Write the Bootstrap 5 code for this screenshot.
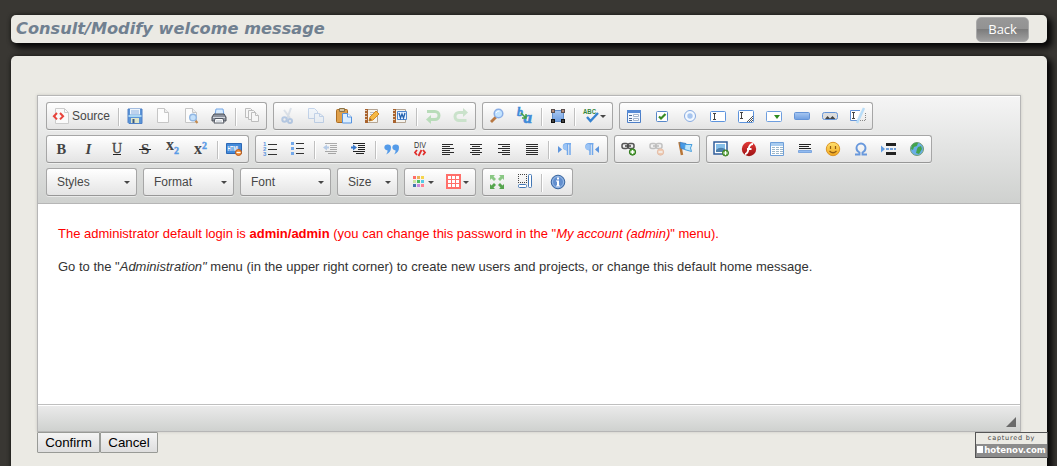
<!DOCTYPE html>
<html lang="en">
<head>
<meta charset="utf-8">
<title>Consult/Modify welcome message</title>
<link href="https://cdn.jsdelivr.net/npm/bootstrap@5.3.0/dist/css/bootstrap.min.css" rel="stylesheet">
<style>
body{background:#393733;font-family:"Liberation Sans",Arial,sans-serif;height:466px;overflow:hidden;color:#333}
.panel{background:#ebeae4;margin-left:11px;width:1036px;border-radius:5px;box-shadow:4px 4px 6px 1px #080808,0 0 4px rgba(0,0,0,.5)}
.titlebar{height:28px;margin-top:15px}
.titlebar h1{font:italic bold 16.2px/28px "DejaVu Sans",Verdana,sans-serif;color:#708090;margin:0 0 0 5px;white-space:nowrap}
.back{width:53px;height:25px;margin-right:18px;padding:0;border:1px solid #aaa;border-radius:5px;background:linear-gradient(#989898 0,#929292 48%,#7c7c7c 50%,#a0a0a0 100%);color:#fff;font:13px/22px "Open Sans",sans-serif;letter-spacing:-.1px}
.mainpane{height:430px;margin-top:13px;padding:39px 26px 0;border-radius:5px 5px 0 0}
.editor{border:1px solid #b6b6b6;width:984px;height:337px;box-shadow:0 0 3px rgba(0,0,0,.15)}
.tools{height:108px;border-bottom:1px solid #b6b6b6;background:linear-gradient(#f5f5f5,#cfd1cf);padding:6px 8px 0;box-shadow:inset 0 1px #fff}
.tools .line{height:28px;margin-bottom:5px;gap:6px}
.grp{height:28px;border:1px solid #a6a6a6;border-bottom-color:#979797;border-radius:3px;background:linear-gradient(#fff,#e4e4e4);box-shadow:0 1px 0 rgba(255,255,255,.5)}
.tb{width:28px;height:26px;padding:5px 6px;border:0;background:none;display:flex;align-items:center;color:#474747;font-size:12px;line-height:16px}
.tb svg{width:16px;height:16px;flex:none;display:block;overflow:visible}
.tb.src{width:69px}.tb.src span{margin-left:3px}
.tb.wide{width:35px}
.wide::after,.combo::after{content:"";border:3px solid transparent;border-top-color:#474747;border-bottom:0;margin-left:1px}
.wide::after{flex:none;margin-left:1px}
.off svg{opacity:.32}
.div-v{width:1px;height:18px;margin:5px 2px 0;background:#c0c0c0;box-shadow:1px 0 #fff}
.combo{width:91px;padding:0 6px 0 10px;font-size:12px;color:#474747}
.combo.short{width:61px}
.doc{height:200px;background:#fff;padding:20px 20px;font-size:13px;line-height:20.8px;white-space:nowrap}
.doc p{margin:0 0 12px}.doc .note{color:red}
.status{height:27px;border-top:1px solid #bfbfbf;background:linear-gradient(#ebebeb,#cfd1cf);box-shadow:inset 0 1px #fff;padding:0 4px 4px}
.grip{border:5px solid #6a6a6a;border-top-color:transparent;border-left-color:transparent;width:0;height:0}
.act{height:21px;border:1px solid #989a96;padding:0;border-radius:1px;background:linear-gradient(#f4f4f4,#dedede);color:#000;font-size:13.33px;line-height:19px}
.stamp{right:9px;top:432px;width:73px;height:26px;border:1px solid #555;background:#ebeae4;color:#444;text-align:center;font:6.500px/11px "DejaVu Sans",sans-serif;letter-spacing:.75px}
.stamp b{display:block;height:13px;background:#8c8c8c;color:#fff;font:bold 8.600px/12px "DejaVu Sans",sans-serif;letter-spacing:-.05px;white-space:nowrap}
.stamp i{display:inline-block;width:6px;height:7px;background:#fff;margin-right:1px}
</style>
</head>
<body>
<svg width="0" height="0" class="position-absolute" aria-hidden="true"><defs>
<linearGradient id="bl" x2="0" y2="1"><stop stop-color="#a9c8f2"/><stop offset="1" stop-color="#6f9ee0"/></linearGradient>
<linearGradient id="gd" x2="0" y2="1"><stop stop-color="#ffe270"/><stop offset="1" stop-color="#f2a61c"/></linearGradient>
<linearGradient id="rd" x2="0" y2="1"><stop stop-color="#e33a37"/><stop offset="1" stop-color="#9c1113"/></linearGradient>
</defs></svg>

<header class="panel titlebar d-flex align-items-center justify-content-between">
<h1>Consult/Modify welcome message</h1><button class="back">Back</button>
</header>
<main class="panel mainpane">
<section class="editor">
<div class="tools">
<div class="line d-flex">
 <div class="grp d-flex">
  <button class="tb src"><svg viewBox="0 0 16 16"><path d="M2.5.5h9l4 4v11h-13z" fill="#fafafa" stroke="#ccc"/><path d="M11.500.5v4h4" fill="none" stroke="#ccc"/><path d="M4 5 .9 8.200 4 11.400M7 5l3.100 3.200L7 11.400" fill="none" stroke="#e8433b" stroke-width="2"/></svg><span>Source</span></button>
  <i class="div-v"></i>
  <button class="tb"><svg viewBox="0 0 16 16"><path d="M1 1h14v14.500H2l-1-1z" fill="#5b94d8" stroke="#4e80c6"/><path d="M3 1h10v5.500H3z" fill="#eef5fc"/><path d="M4 3h8M4 5h8" stroke="#8bb0de"/><path d="M1.500 8h13" stroke="#a9d6f2" stroke-width="2"/><path d="M4 10h8v5H4z" fill="#dfe5c8"/><path d="M5.500 11h2v4h-2z" fill="#3d5c85"/></svg></button>
  <button class="tb"><svg viewBox="0 0 16 16"><path d="M2.500.5h7l4 4v10h-11z" fill="#fcfcfc" stroke="#c6c6c6"/><path d="M9.500.5v4h4" fill="#eee" stroke="#c6c6c6"/></svg></button>
  <button class="tb"><svg viewBox="0 0 16 16"><path d="M2.500.5h7l4 4v10h-11z" fill="#fcfcfc" stroke="#c6c6c6"/><path d="M9.500.5v4h4" fill="#eee" stroke="#c6c6c6"/><path d="m12 12 2.500 3" stroke="#c48a4e" stroke-width="2"/><circle cx="10" cy="9.500" r="3.300" fill="#c4e0fa" stroke="#91b7e3" stroke-width="1.400"/></svg></button>
  <button class="tb"><svg viewBox="0 0 16 16"><path d="m4 7 1-6h7l1 6z" fill="#d7ebff" stroke="#75a7e6"/><path d="m1 9 2-3h10l2 3v4H1z" fill="#8d939e" stroke="#4c5058"/><path d="M2 9.500h12" stroke="#d3d7de"/><path d="M4 10.500h8l1 4.500H3z" fill="#fff" stroke="#505661"/><path d="M5 13h6" stroke="#b5c0cc"/></svg></button>
  <i class="div-v"></i>
  <button class="tb"><svg viewBox="0 0 16 16" fill="#f6f6f6" stroke="#bdbdbd"><path d="M1.500.5h5l2 2v7h-7z"/><path d="M4.500 2.500h5l2 2v7h-7z"/><path d="M7.500 4.500h4l3 3v6h-7z"/><path d="M11.500 4.500v3h3"/></svg></button>
 </div>
 <div class="grp d-flex">
  <button class="tb off"><svg viewBox="0 0 16 16" fill="none"><path d="m11 0-4 11M4 2l6 8" stroke="#a0b4cc" stroke-width="2"/><circle cx="4.500" cy="11.500" r="2.200" stroke="#3d78c8" stroke-width="2"/><circle cx="10" cy="13" r="2" stroke="#3d78c8" stroke-width="2"/></svg></button>
  <button class="tb off"><svg viewBox="0 0 16 16" fill="#e0efff" stroke="#5a8cd0"><path d="M.5.5h6l3 3v7h-9z"/><path d="M6.500 5.500h5l4 3v6h-9z"/><path d="M11.500 5.500v3h4" fill="none"/></svg></button>
  <button class="tb"><svg viewBox="0 0 16 16"><rect x=".5" y="1.500" width="11" height="13" rx="1" fill="#dfa04b" stroke="#ac6c22"/><path d="M3.500.5h5v3h-5z" fill="#d6c6a8" stroke="#8d7446"/><path d="M6.500 5.500h5l4 3.500v6h-9z" fill="#dceeff" stroke="#5693df"/><path d="M11.500 5.500V9h4" fill="#fff" stroke="#5693df"/></svg></button>
  <button class="tb"><svg viewBox="0 0 16 16"><path d="M3.500 1.500h10v13h-10z" fill="#f6f3ed" stroke="#b4a594"/><path d="M1 1h3v14H1z" fill="#a9632e"/><path d="M1 2.500h2M1 5.500h2M1 8.500h2M1 11.500h2" stroke="#e1cdb8"/><path d="M6 4.500h6M6 6.500h4" stroke="#b8bcc3"/><path d="m5 13 1-4 6-6 3 3-6 6z" fill="#f5b844" stroke="#d68a24"/><path d="m5 13 1-3 2 2z" fill="#986332"/></svg></button>
  <button class="tb"><svg viewBox="0 0 16 16"><path d="M3.500 1.500h10v13h-10z" fill="#f6f3ed" stroke="#b4a594"/><path d="M1 1h3v14H1z" fill="#a9632e"/><path d="M1 2.500h2M1 5.500h2M1 8.500h2M1 11.500h2" stroke="#e1cdb8"/><path d="M5.500 3.500h9v8h-9z" fill="#e7f1ff" stroke="#4e86ce"/><path d="m7 5 1.500 5L10 6l1.500 4L13 5" fill="none" stroke="#2361ae" stroke-width="1.300"/></svg></button>
  <i class="div-v"></i>
  <button class="tb"><svg viewBox="0 0 16 16"><path d="M2 3.500h8a4 4 0 0 1 0 8H5" fill="none" stroke="#b9dcba" stroke-width="3"/><path d="M6 7v9l-5-4.500z" fill="#b9dcba"/></svg></button>
  <button class="tb"><svg viewBox="0 0 16 16"><path d="M13.500 12.500H6a4 4 0 0 1 0-8h5" fill="none" stroke="#cae2cb" stroke-width="3"/><path d="M10 0v9l5-4.500z" fill="#cae2cb"/></svg></button>
 </div>
 <div class="grp d-flex">
  <button class="tb"><svg viewBox="0 0 16 16"><path d="m2 14 5-5" stroke="#b87842" stroke-width="2.800"/><circle cx="9.500" cy="5.500" r="4.300" fill="#c2e3ff" stroke="#8aaee6" stroke-width="1.500"/><path d="M7 5q1-2.500 3.500-2" fill="none" stroke="#fff"/></svg></button>
  <button class="tb"><svg viewBox="0 0 16 16"><text x="0" y="8" font-family="Liberation Serif" font-size="12" font-weight="bold" font-style="italic" fill="#3f8bd8" stroke="#3f8bd8" stroke-width=".5">b</text><text x="6.500" y="15" font-family="Liberation Serif" font-size="17" font-weight="bold" font-style="italic" fill="#3f8bd8" stroke="#3f8bd8" stroke-width=".6">a</text><path d="m4 5 4.500 4.500M9 6v4H5" fill="none" stroke="#42a148" stroke-width="1.500"/></svg></button>
  <i class="div-v"></i>
  <button class="tb"><svg viewBox="0 0 16 16"><path d="M2.500 2.500h11v11h-11z" fill="url(#bl)" stroke="#638fca"/><path d="M1 1h4v4H1zM11 1h4v4h-4z" fill="#5d5150"/><path d="M2 2h2v2H2zM12 2h2v2h-2z" fill="#b98f7c"/><path d="M1 11h4v4H1zM11 11h4v4h-4z" fill="#111"/><path d="M2 12h2v2H2zM12 12h2v2h-2z" fill="#444"/></svg></button>
  <i class="div-v"></i>
  <button class="tb wide"><svg viewBox="0 0 16 16"><text x="0" y="6" textLength="13" lengthAdjust="spacingAndGlyphs" font-family="Liberation Sans" font-size="7" font-weight="bold" fill="#35863a">ABC</text><path d="m4 9 3.500 4L15 5" fill="none" stroke="#3682d1" stroke-width="2.400"/></svg></button>
 </div>
 <div class="grp d-flex">
  <button class="tb"><svg viewBox="0 0 16 16"><path d="M1.500 2.500h13v12h-13z" fill="#f1f7ff" stroke="#4c7ec7"/><path d="M1 2h14v3H1z" fill="#568bd6"/><path d="M3 7.500h3M3 10.500h3M3 12.500h3" stroke="#4f6b91"/><path d="M7.500 6.500h5v2h-5zM7.500 10.500h5v2h-5z" fill="#fff" stroke="#a3b6ce"/></svg></button>
  <button class="tb"><svg viewBox="0 0 16 16"><rect x="2.500" y="3.500" width="11" height="10" rx="1" fill="#fff" stroke="#5787c9"/><path d="m5 8.500 2 2L11.500 6" fill="none" stroke="#3a8c24" stroke-width="2.200"/></svg></button>
  <button class="tb"><svg viewBox="0 0 16 16"><circle cx="8" cy="8" r="5.500" fill="#f2f8ff" stroke="#87aae0"/><circle cx="8" cy="8" r="2.700" fill="#a7c5ef"/></svg></button>
  <button class="tb"><svg viewBox="0 0 16 16"><rect x=".5" y="3.500" width="15" height="10" rx="1" fill="#fff" stroke="#5c93dd"/><path d="M3 5.500h3M3 11.500h3M4.500 5.500v6" stroke="#444"/></svg></button>
  <button class="tb"><svg viewBox="0 0 16 16"><rect x=".5" y="2.500" width="15" height="12" rx="1" fill="#fff" stroke="#5c93dd"/><path d="M2 4.500h3M2 10.500h3M3.500 4.500v6" stroke="#444"/><path d="m9 14 6-6M11 14l4-4M13 14l2-2" stroke="#555"/></svg></button>
  <button class="tb"><svg viewBox="0 0 16 16"><rect x=".5" y="3.500" width="15" height="10" rx="1" fill="#fff" stroke="#6e9edf"/><path d="M8 7h6l-3 4z" fill="#2f8b20"/></svg></button>
  <button class="tb"><svg viewBox="0 0 16 16"><rect x=".5" y="4.500" width="15" height="7" rx="1" fill="url(#bl)" stroke="#6594d7"/></svg></button>
  <button class="tb"><svg viewBox="0 0 16 16"><rect x=".5" y="4.500" width="15" height="7" rx="2" fill="#ddd" stroke="#6594d7"/><path d="m3 11 2.500-3L8 10.500 10.500 8l3 3z" fill="#464646"/></svg></button>
  <button class="tb"><svg viewBox="0 0 16 16"><path d="M10 2.500H.5v10H7" fill="#fff" stroke="#6594d7"/><path d="M2 4.500h3M2 10.500h3M3.500 4.500v6" stroke="#444"/><path d="m14 0-7 15" stroke="#b9ddf8" stroke-width="2.500"/><path d="M15.500 5v7.500H9" fill="none" stroke="#888" stroke-dasharray="1"/></svg></button>
 </div>
</div>
<div class="line d-flex">
 <div class="grp d-flex">
  <button class="tb"><svg viewBox="0 0 16 16" font-family="Liberation Serif"><text x="3.500" y="13" font-size="14.500" font-weight="bold" fill="#444">B</text></svg></button>
  <button class="tb"><svg viewBox="0 0 16 16" font-family="Liberation Serif"><text x="4.500" y="13" font-size="15" font-weight="bold" font-style="italic" fill="#444">I</text></svg></button>
  <button class="tb"><svg viewBox="0 0 16 16" font-family="Liberation Serif"><text x="3" y="12" font-size="14" fill="#444" stroke="#444" stroke-width=".3">U</text><path d="M4 13.500h8" stroke="#222"/></svg></button>
  <button class="tb"><svg viewBox="0 0 16 16" font-family="Liberation Serif"><text x="4" y="13" font-size="15" font-weight="bold" fill="#444">S</text><path d="M2 8.500h12" stroke="#222"/></svg></button>
  <button class="tb"><svg viewBox="0 0 16 16" font-family="Liberation Serif" font-weight="bold"><text x="1" y="9" font-size="16" fill="#444">x</text><text x="9" y="13" font-size="10" fill="#5a9be6" stroke="#5a9be6" stroke-width=".4">2</text></svg></button>
  <button class="tb"><svg viewBox="0 0 16 16" font-family="Liberation Serif" font-weight="bold"><text x="1" y="13" font-size="16" fill="#444">x</text><text x="9" y="7.500" font-size="10" fill="#5a9be6" stroke="#5a9be6" stroke-width=".4">2</text></svg></button>
  <i class="div-v"></i>
  <button class="tb"><svg viewBox="0 0 16 16"><path d="M.5 2.500h15v10H.5z" fill="#438ada" stroke="#2d68b5"/><text x="1.500" y="10" textLength="12" lengthAdjust="spacingAndGlyphs" font-family="Liberation Sans" font-size="7" font-weight="bold" fill="#fff">HTML</text><circle cx="12.500" cy="11.500" r="3" fill="#f08e36" stroke="#bc5a17"/><path d="M10.500 11.500h4" stroke="#fff" stroke-width="1.300"/></svg></button>
 </div>
 <div class="grp d-flex">
  <button class="tb"><svg viewBox="0 0 16 16"><path d="M6 3.500h9M6 8.500h9M6 13.500h9" stroke="#333"/><g font-family="Liberation Sans" font-size="6" font-weight="bold" fill="#5d96df"><text x="1" y="5">1</text><text x="1" y="10">2</text><text x="1" y="15">3</text></g></svg></button>
  <button class="tb"><svg viewBox="0 0 16 16"><path d="M6 2.500h8M6 7.500h8M6 12.500h8" stroke="#333"/><path d="M1 1h3v3H1zM1 6h3v3H1zM1 11h3v3H1z" fill="#74a9eb"/></svg></button>
  <i class="div-v"></i>
  <button class="tb off"><svg viewBox="0 0 16 16"><path d="M2 2.500h12M7 4.500h7M7 6.500h7M7 8.500h7M2 10.500h12M5 12.500h8" stroke="#111"/><path d="M4 3.500v6l-4-3z" fill="#3979cc"/><path d="M4 6.500h2" stroke="#3979cc" stroke-width="2"/></svg></button>
  <button class="tb"><svg viewBox="0 0 16 16"><path d="M2 2.500h12M7 4.500h7M7 6.500h7M7 8.500h7M2 10.500h12M5 12.500h8" stroke="#222"/><path d="M2 3.500v6l4-3z" fill="#3979cc"/><path d="M0 6.500h2" stroke="#3979cc" stroke-width="2"/></svg></button>
  <i class="div-v"></i>
  <button class="tb"><svg viewBox="0 0 16 16" fill="#549be9"><path d="M4 3.500a3 3 0 1 0-.3 5.900Q3.500 11.500 2 13.500q5-2 5-7A3 3 0 0 0 4 3.500zM12 3.500a3 3 0 1 0-.3 5.900Q11.500 11.500 10 13.500q5-2 5-7a3 3 0 0 0-3-3z"/></svg></button>
  <button class="tb"><svg viewBox="0 0 16 16" fill="none"><text x="2" y="7" font-family="Liberation Sans" font-size="9.500" textLength="12" lengthAdjust="spacingAndGlyphs" fill="#333">DIV</text><path d="M5 9 3 11.500 5 14M11 9l2 2.500-2 2.500M9.500 9l-3 6" stroke="#e02f2c" stroke-width="1.800"/></svg></button>
  <button class="tb"><svg viewBox="0 0 16 16" stroke="#2b2b2b"><path d="M2 3.500h11M2 5.500h8M2 7.500h12M2 9.500h8M2 11.500h12M2 13.500h8"/></svg></button>
  <button class="tb"><svg viewBox="0 0 16 16" stroke="#2b2b2b"><path d="M2 3.500h12M4 5.500h8M2 7.500h12M4 9.500h8M2 11.500h12M4 13.500h8"/></svg></button>
  <button class="tb"><svg viewBox="0 0 16 16" stroke="#2b2b2b"><path d="M2 3.500h12M6 5.500h8M2 7.500h12M6 9.500h8M2 11.500h12M6 13.500h8"/></svg></button>
  <button class="tb"><svg viewBox="0 0 16 16" stroke="#2b2b2b"><path d="M2 3.500h12M2 5.500h12M2 7.500h12M2 9.500h12M2 11.500h12M2 13.500h12"/></svg></button>
  <i class="div-v"></i>
  <button class="tb"><svg viewBox="0 0 16 16"><path d="M1 5v7l4-3.500z" fill="#5d95dd"/><path d="M14 2.700H9.500a3 3 0 0 0 0 6H10M10.500 3v11M13 3v11" fill="none" stroke="#72a8eb" stroke-width="1.500"/><path d="M10 3H9a3 3 0 0 0 0 6h1z" fill="#9bc4f5"/></svg></button>
  <button class="tb"><svg viewBox="0 0 16 16"><path d="M14 5v7l-4-3.500z" fill="#5d95dd"/><path d="M8.500 2.700H4a3 3 0 0 0 0 6h.5M5 3v11M7.500 3v11" fill="none" stroke="#72a8eb" stroke-width="1.500"/><path d="M4.500 3h-1a3 3 0 0 0 0 6h1z" fill="#9bc4f5"/></svg></button>
 </div>
 <div class="grp d-flex">
  <button class="tb"><svg viewBox="0 0 16 16"><g fill="#eee" stroke="#555" stroke-width="1.500"><rect x="1" y="2.500" width="6" height="5" rx="2"/><rect x="7" y="2.500" width="6" height="5" rx="2"/></g><path d="M4 5h6" stroke="#444" stroke-width="1.500"/><circle cx="11.500" cy="11" r="3.200" fill="#55a33a" stroke="#347b21"/><path d="M9.500 11h4M11.500 9v4" stroke="#fff" stroke-width="1.500"/></svg></button>
  <button class="tb off"><svg viewBox="0 0 16 16"><g fill="#eee" stroke="#555" stroke-width="1.500"><rect x="1" y="2.500" width="6" height="5" rx="2"/><rect x="7" y="2.500" width="6" height="5" rx="2"/></g><path d="M4 5h6" stroke="#444" stroke-width="1.500"/><circle cx="11.500" cy="11" r="3.200" fill="#f08336" stroke="#d45d1d"/><path d="M9.500 11h4" stroke="#fff" stroke-width="1.500"/></svg></button>
  <button class="tb"><svg viewBox="0 0 16 16"><path d="m2.500 1 2.500 13" stroke="#b97637" stroke-width="2.500"/><path d="m3 1.500 6 1v6l-5-1z" fill="#459ae8" stroke="#4584c2"/><path d="m8 3.500 7 0-1.500 3.500 1 3.500-7-2z" fill="#bde6fd" stroke="#4a9fdd"/></svg></button>
 </div>
 <div class="grp d-flex">
  <button class="tb"><svg viewBox="0 0 16 16"><path d="M1 1h13v12H1z" fill="#fff" stroke="#315d9b" stroke-width="1.500"/><path d="M3 3h9v8H3z" fill="#85bfe9"/><path d="M3 9q4-4 9-1v3H3z" fill="#4d7fac"/><circle cx="12.500" cy="12" r="3" fill="#67ae4a" stroke="#397d23"/><path d="M10.500 12h4M12.500 10v4" stroke="#fff"/></svg></button>
  <button class="tb"><svg viewBox="0 0 16 16"><circle cx="8" cy="8" r="7.200" fill="url(#rd)"/><path d="M12 3Q8.500 3 7.500 8T4 13M6 8h4.500" fill="none" stroke="#fff" stroke-width="1.800"/></svg></button>
  <button class="tb"><svg viewBox="0 0 16 16"><path d="M1.500 1.500h13v13h-13z" fill="#fff" stroke="#6e9fd9"/><path d="M2 2h12v3H2z" fill="#a8ccf0"/><path d="M3 6.500h3M7 6.500h3M11 6.500h3M3 8.500h3M7 8.500h3M11 8.500h3M3 10.500h3M7 10.500h3M11 10.500h3M3 12.500h3M7 12.500h3M11 12.500h3" stroke="#9db7c9"/></svg></button>
  <button class="tb"><svg viewBox="0 0 16 16"><path d="M2 3.500h12M2 5.500h10M2 7.500h12" stroke="#222"/><path d="M1.500 9.500h13v2h-13z" fill="#92bbf0" stroke="#7da7df"/></svg></button>
  <button class="tb"><svg viewBox="0 0 16 16"><circle cx="8" cy="8" r="6.700" fill="url(#gd)" stroke="#db9529"/><path d="M5.500 5v3M10.500 5v3M4.500 10q3.500 3.500 7 0" fill="none" stroke="#925e14" stroke-width="1.200"/></svg></button>
  <button class="tb"><svg viewBox="0 0 16 16"><path d="M2 13.500h4.500v-2Q3.500 10 3.500 7a4.500 4.500 0 0 1 9 0q0 3-3 4.500v2H14" fill="none" stroke="#6898dc" stroke-width="1.900"/></svg></button>
  <button class="tb"><svg viewBox="0 0 16 16"><path d="M5 3.500h10M5 12.500h10" stroke="#222" stroke-width="3"/><path d="M5 8h10" stroke="#4888d6" stroke-width="1.500" stroke-dasharray="3 1"/><path d="m0 4.500 4 3.500-4 3.500z" fill="#609be0"/></svg></button>
  <button class="tb"><svg viewBox="0 0 16 16"><circle cx="8" cy="8" r="6.500" fill="#6aaee8" stroke="#719d76"/><path d="M3 4q3-3 6-2L8 5 5 6l-1 3-2-1zM9 6l3-1 1 3-3 5-3-1 1-4z" fill="#43a44c"/></svg></button>
 </div>
</div>
<div class="line d-flex">
 <div class="grp combo d-flex align-items-center justify-content-between">Styles</div>
 <div class="grp combo d-flex align-items-center justify-content-between">Format</div>
 <div class="grp combo d-flex align-items-center justify-content-between">Font</div>
 <div class="grp combo short d-flex align-items-center justify-content-between">Size</div>
 <div class="grp d-flex">
  <button class="tb wide"><svg viewBox="0 0 16 16"><path d="M2 2h3v3H2z" fill="#ff6c68"/><path d="M6 2h3v3H6z" fill="#eab155"/><path d="M10 2h3v3h-3z" fill="#f6d54e"/><path d="M2 6h3v3H2z" fill="#cce6a0"/><path d="M6 6h3v3H6z" fill="#4cbb62"/><path d="M10 6h3v3h-3z" fill="#55c9e5"/><path d="M2 10h3v3H2z" fill="#4475aa"/><path d="M6 10h3v3H6z" fill="#c987df"/><path d="M10 10h3v3h-3z" fill="#ff8293"/></svg></button>
  <button class="tb wide"><svg viewBox="0 0 16 16"><path d="M0 0h15v15H0z" fill="#ff6f6a"/><path d="M2 2h3v3H2zM6 2h3v3H6zM10 2h3v3h-3zM2 6h3v3H2zM6 6h3v3H6zM10 6h3v3h-3zM2 10h3v3H2zM6 10h3v3H6zM10 10h3v3h-3z" fill="#fff"/></svg></button>
 </div>
 <div class="grp d-flex">
  <button class="tb"><svg viewBox="0 0 16 16"><path d="M1 1h5L4.500 2.500 7 5 5 7 2.500 4.500 1 6zM15 1v5l-1.500-1.500L11 7 9 5l2.500-2.500L10 1z" fill="#8ac884"/><path d="M1 15v-5l1.500 1.500L5 9l2 2-2.500 2.500L6 15zM15 15h-5l1.500-1.500L9 11l2-2 2.500 2.500L15 10z" fill="#56a54e"/></svg></button>
  <button class="tb"><svg viewBox="0 0 16 16" fill="none"><path d="M1 .5h9M1 8.500h9M1.500 0v9M9.500 0v9" stroke="#444" stroke-dasharray="1"/><rect x="1.500" y="10.500" width="8" height="3" rx="1" fill="#fff" stroke="#4377b5"/><rect x="11.500" y=".5" width="3" height="13" rx="1" fill="#fff" stroke="#4377b5"/></svg></button>
  <i class="div-v"></i>
  <button class="tb"><svg viewBox="0 0 16 16"><circle cx="8" cy="8" r="6.800" fill="#638fce" stroke="#3b679f"/><circle cx="8" cy="8" r="5.500" fill="none" stroke="#9bbde9"/><path d="M7 3.500h2v2H7zM6 6.500h3v5h1v1H6v-1h1v-4H6z" fill="#fff"/></svg></button>
 </div>
</div>
</div>
<div class="doc"><p class="note">The administrator default login is <strong>admin/admin</strong> (you can change this password in the "<em>My account (admin)</em>" menu).</p><p>Go to the "<em>Administration"</em> menu (in the upper right corner) to create new users and projects, or change this default home message.</p></div>
<div class="status d-flex justify-content-end align-items-end"><span class="grip"></span></div>
</section>
<div class="d-flex"><button class="act" style="width:63px">Confirm</button><button class="act" style="width:58px">Cancel</button></div>
</main>
<div class="stamp position-absolute">captured by<b><i></i>hotenov.com</b></div>
<script src="https://cdn.jsdelivr.net/npm/bootstrap@5.3.0/dist/js/bootstrap.bundle.min.js"></script>
</body>
</html>
